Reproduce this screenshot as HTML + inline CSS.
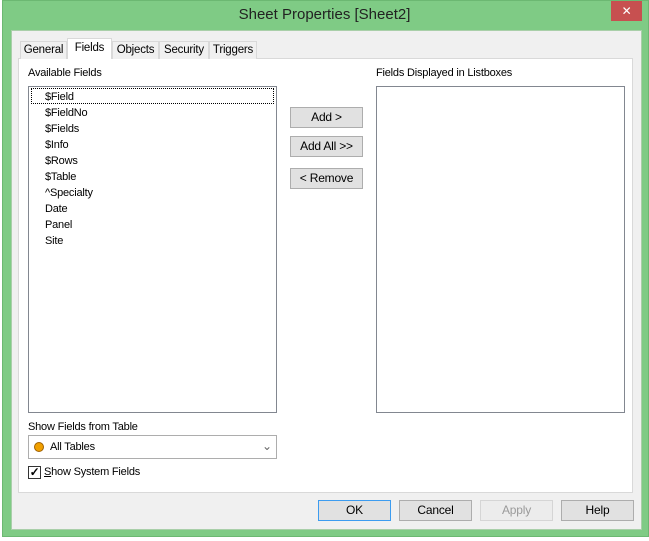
<!DOCTYPE html>
<html><head><style>
*{margin:0;padding:0;box-sizing:border-box}
body{width:649px;height:541px;background:#fff;position:relative;overflow:hidden;font-family:"Liberation Sans",sans-serif;font-size:11px;letter-spacing:-0.2px;color:#000}
.a{position:absolute}
.btn{position:absolute;background:#e1e1e1;border:1px solid #adadad;text-align:center;font-size:12px;line-height:19px}
.list{position:absolute;background:#fff;border:1px solid #828790}
.tab{position:absolute;top:41px;height:18px;background:#f0f0f0;border:1px solid #d9d9d9;border-bottom:none;font-size:11.5px;line-height:16px;text-align:center}
</style></head><body>
<div class="a" style="left:2px;top:0;width:647px;height:537px;background:#7fcb85;border:1px solid #6cb872"></div>
<div class="a" style="left:0;top:6px;width:649px;text-align:center;font-size:15px;color:#222;letter-spacing:0">Sheet Properties [Sheet2]</div>
<div class="a" style="left:611px;top:1px;width:31px;height:20px;background:#c75050;color:#fff;text-align:center;font-size:12px;line-height:20px">✕</div>
<div class="a" style="left:11px;top:30px;width:631px;height:500px;background:#f0f0f0;border:1px solid #a9cfa9"></div>
<div class="a" style="left:18px;top:58px;width:615px;height:435px;background:#fff;border:1px solid #d9d9d9"></div>
<div class="tab" style="left:20px;width:47px">General</div>
<div class="tab" style="left:67px;width:45px;top:38px;height:21px;background:#fff;line-height:19px">Fields</div>
<div class="tab" style="left:112px;width:47px">Objects</div>
<div class="tab" style="left:159px;width:50px">Security</div>
<div class="tab" style="left:209px;width:48px">Triggers</div>
<div class="a" style="left:28px;top:67px">Available Fields</div>
<div class="a" style="left:376px;top:67px">Fields Displayed in Listboxes</div>
<div class="list" style="left:28px;top:86px;width:249px;height:327px">
<div class="a" style="left:2px;top:1px;width:243px;height:16px;border:1px dotted #000"></div>
<div class="a" style="left:16px;top:2px;line-height:16px">$Field<br>$FieldNo<br>$Fields<br>$Info<br>$Rows<br>$Table<br>^Specialty<br>Date<br>Panel<br>Site</div>
</div>
<div class="list" style="left:376px;top:86px;width:249px;height:327px"></div>
<div class="btn" style="left:290px;top:107px;width:73px;height:21px">Add &gt;</div>
<div class="btn" style="left:290px;top:136px;width:73px;height:21px">Add All &gt;&gt;</div>
<div class="btn" style="left:290px;top:168px;width:73px;height:21px">&lt; Remove</div>
<div class="a" style="left:28px;top:421px">Show Fields from Table</div>
<div class="a" style="left:28px;top:435px;width:249px;height:24px;background:#fff;border:1px solid #adadad">
<div class="a" style="left:5px;top:6px;width:10px;height:10px;border-radius:50%;background:#f0a000;border:1px solid #a06000"></div>
<div class="a" style="left:21px;top:5px">All Tables</div>
<div class="a" style="left:233px;top:3px;font-size:12px;color:#666">⌄</div>
</div>
<div class="a" style="left:28px;top:466px;width:13px;height:13px;border:1px solid #333;background:#fff;font-size:12px;line-height:11px;text-align:center;font-weight:bold">✓</div>
<div class="a" style="left:44px;top:466px"><u>S</u>how System Fields</div>
<div class="btn" style="left:318px;top:500px;width:73px;height:21px;border-color:#3c9cf0">OK</div>
<div class="btn" style="left:399px;top:500px;width:73px;height:21px">Cancel</div>
<div class="btn" style="left:480px;top:500px;width:73px;height:21px;color:#9a9a9a;background:#ececec;border-color:#d5d5d5">Apply</div>
<div class="btn" style="left:561px;top:500px;width:73px;height:21px">Help</div>
</body></html>
